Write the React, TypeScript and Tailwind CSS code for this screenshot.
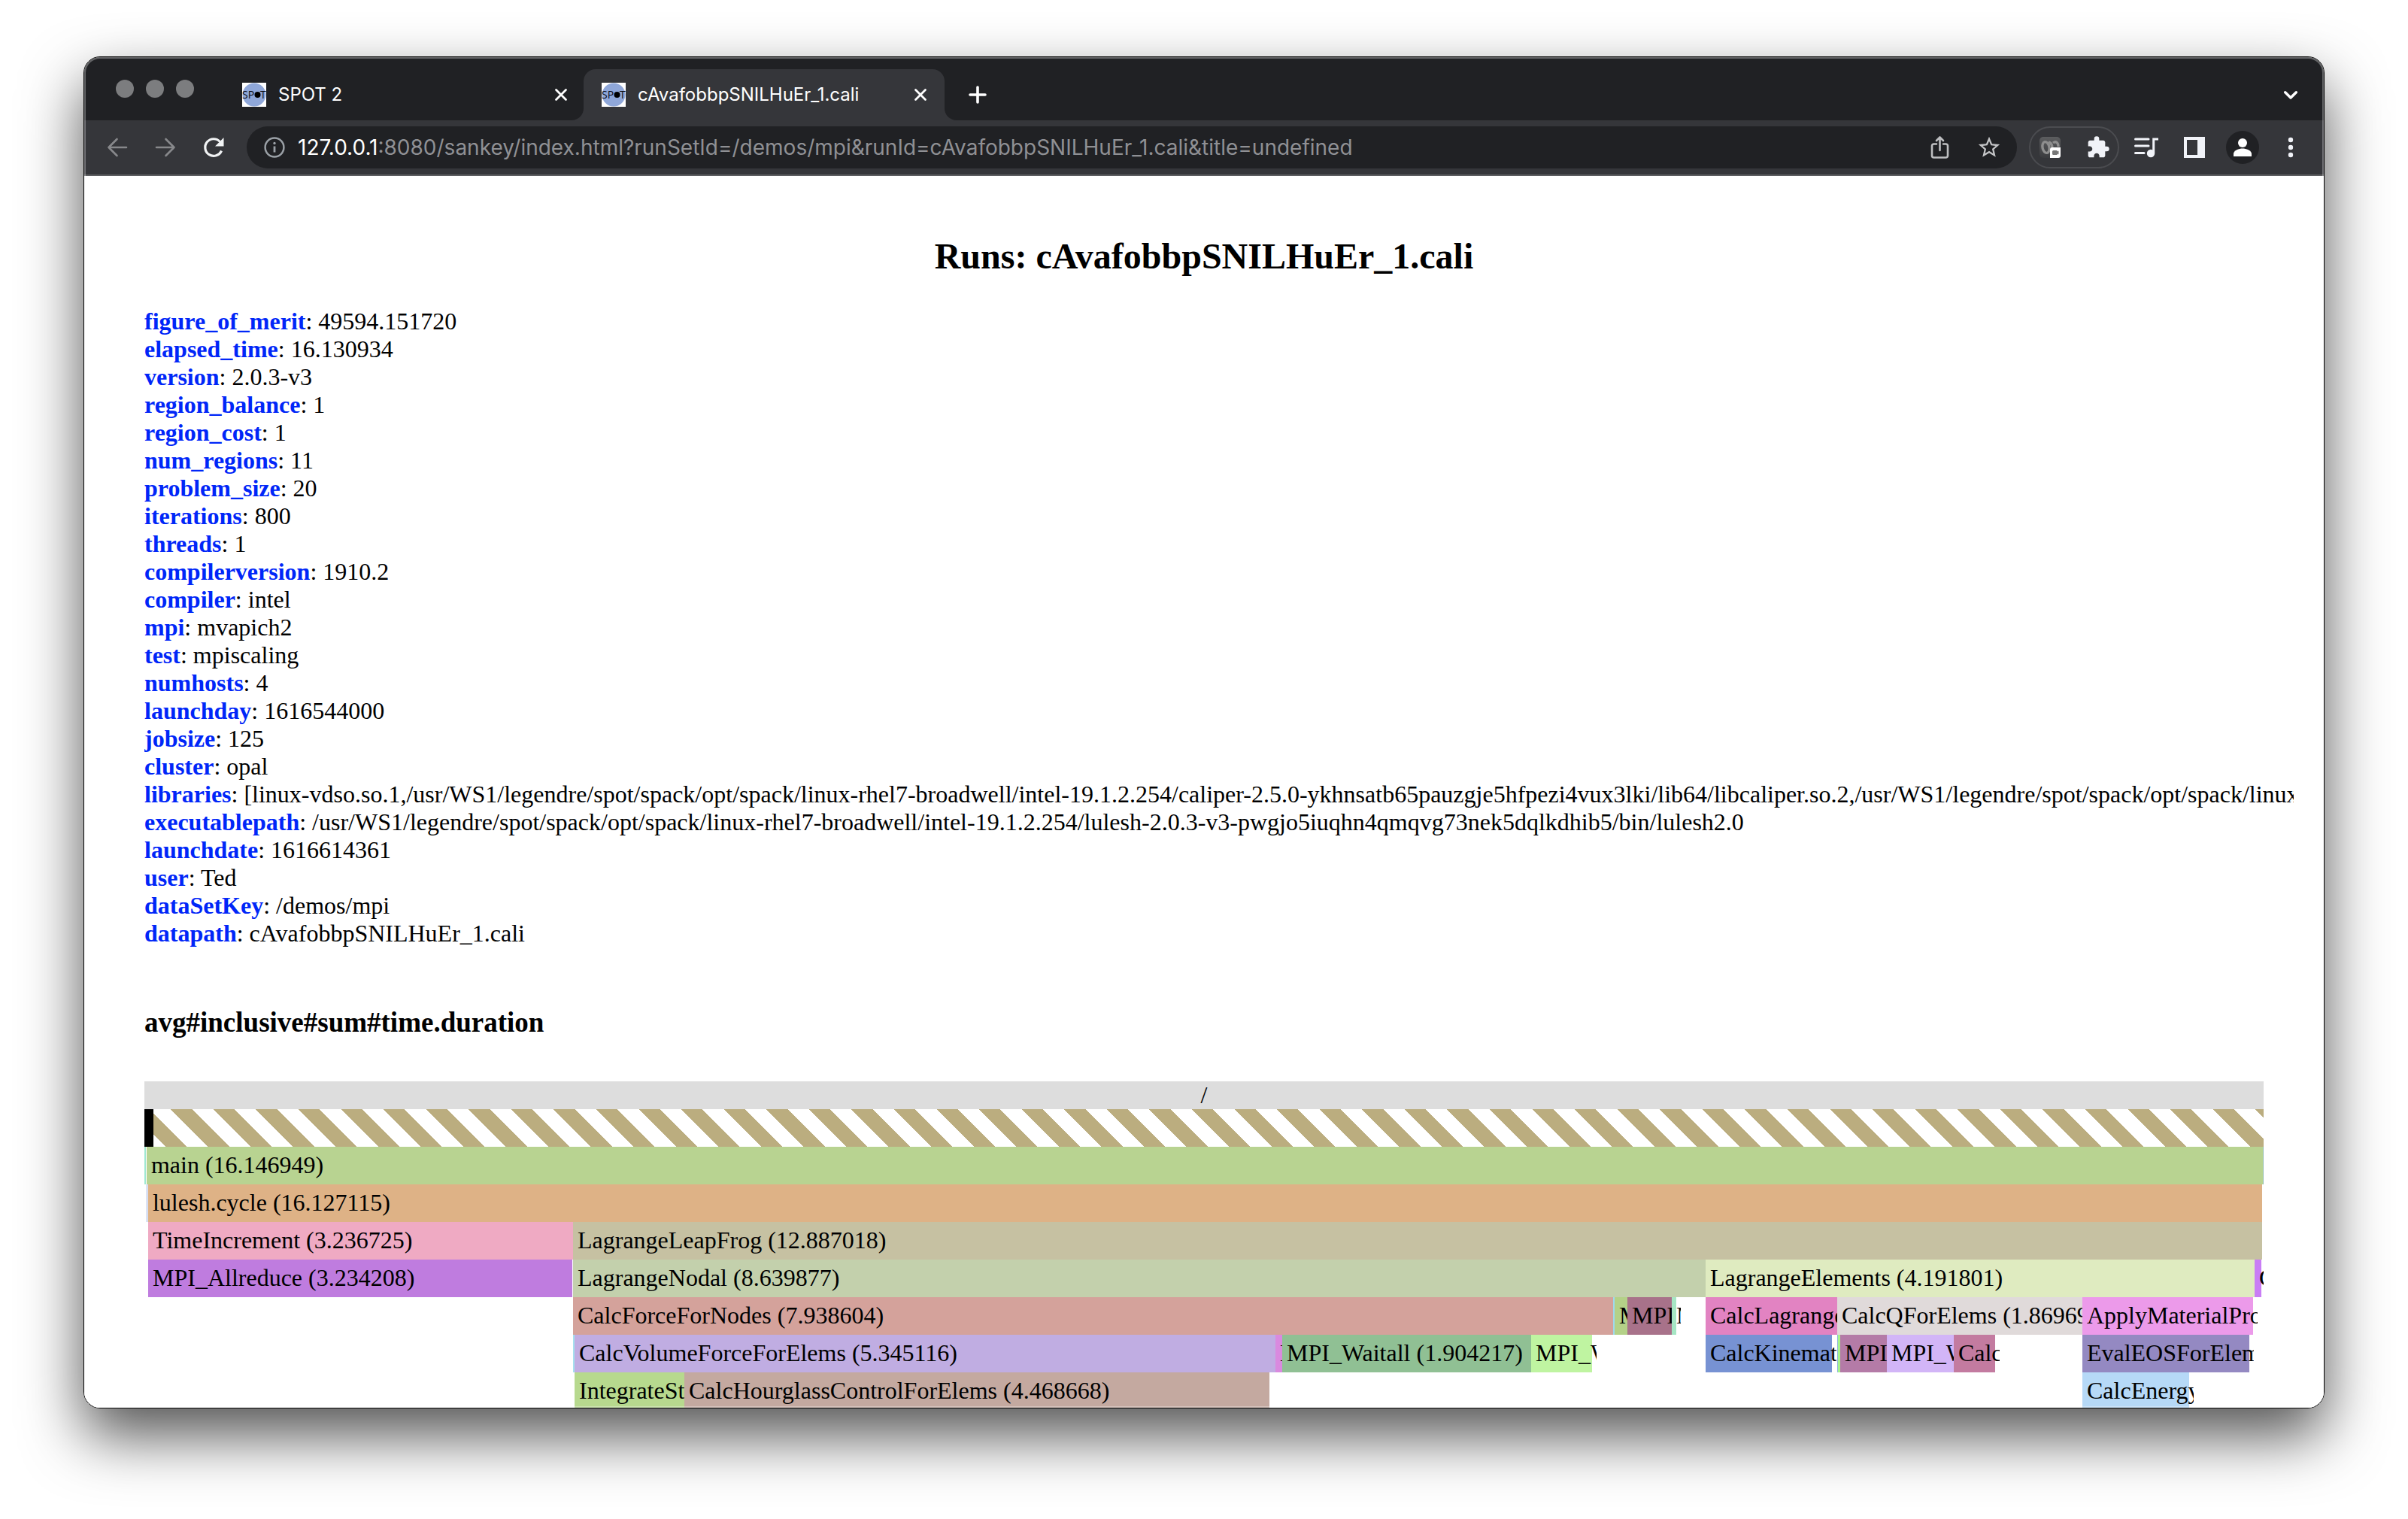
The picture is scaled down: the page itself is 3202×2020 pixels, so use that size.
import React from "react";

type Bar = { from: number; to: number; color: string; label?: string };

const SPAN = 2818;

const runInfo: [string, string][] = [
  ["figure_of_merit", "49594.151720"],
  ["elapsed_time", "16.130934"],
  ["version", "2.0.3-v3"],
  ["region_balance", "1"],
  ["region_cost", "1"],
  ["num_regions", "11"],
  ["problem_size", "20"],
  ["iterations", "800"],
  ["threads", "1"],
  ["compilerversion", "1910.2"],
  ["compiler", "intel"],
  ["mpi", "mvapich2"],
  ["test", "mpiscaling"],
  ["numhosts", "4"],
  ["launchday", "1616544000"],
  ["jobsize", "125"],
  ["cluster", "opal"],
  [
    "libraries",
    "[linux-vdso.so.1,/usr/WS1/legendre/spot/spack/opt/spack/linux-rhel7-broadwell/intel-19.1.2.254/caliper-2.5.0-ykhnsatb65pauzgje5hfpezi4vux3lki/lib64/libcaliper.so.2,/usr/WS1/legendre/spot/spack/opt/spack/linux",
  ],
  [
    "executablepath",
    "/usr/WS1/legendre/spot/spack/opt/spack/linux-rhel7-broadwell/intel-19.1.2.254/lulesh-2.0.3-v3-pwgjo5iuqhn4qmqvg73nek5dqlkdhib5/bin/lulesh2.0",
  ],
  ["launchdate", "1616614361"],
  ["user", "Ted"],
  ["dataSetKey", "/demos/mpi"],
  ["datapath", "cAvafobbpSNILHuEr_1.cali"],
];

/* Each row is one call depth; positions are units of the root's span. */
const rows: Bar[][] = [
  [
    { from: 0, to: 2, color: "#a0e8d2" },
    { from: 3, to: 2817, color: "#b8d391", label: "main (16.146949)" },
    { from: 2817, to: 2818, color: "#97bfb4" },
  ],
  [
    { from: 3, to: 4, color: "#8ea5dc" },
    { from: 5, to: 2816, color: "#deb286", label: "lulesh.cycle (16.127115)" },
  ],
  [
    { from: 5, to: 570, color: "#efaac3", label: "TimeIncrement (3.236725)" },
    { from: 570, to: 2816, color: "#c6c1a2", label: "LagrangeLeapFrog (12.887018)" },
  ],
  [
    { from: 5, to: 569, color: "#bf7cdf", label: "MPI_Allreduce (3.234208)" },
    { from: 570, to: 2076, color: "#c3d0ac", label: "LagrangeNodal (8.639877)" },
    { from: 2076, to: 2806, color: "#dfebc0", label: "LagrangeElements (4.191801)" },
    { from: 2806, to: 2815, color: "#c97df5", label: "C" },
  ],
  [
    { from: 570, to: 1953, color: "#d4a29b", label: "CalcForceForNodes (7.938604)" },
    { from: 1953, to: 1955, color: "#9fd9ee" },
    { from: 1955, to: 1972, color: "#b4d188", label: "M" },
    { from: 1972, to: 2031, color: "#a8728a", label: "MPI" },
    { from: 2031, to: 2037, color: "#a6e6c4", label: "M" },
    { from: 2076, to: 2251, color: "#e283c2", label: "CalcLagrange" },
    { from: 2251, to: 2577, color: "#e0dada", label: "CalcQForElems (1.86969" },
    { from: 2577, to: 2804, color: "#ec9aea", label: "ApplyMaterialPro" },
  ],
  [
    { from: 570, to: 572, color: "#a5e0ee" },
    { from: 572, to: 1504, color: "#c0ade2", label: "CalcVolumeForceForElems (5.345116)" },
    { from: 1504, to: 1513, color: "#d98adf", label: "M" },
    { from: 1513, to: 1844, color: "#90c094", label: "MPI_Waitall (1.904217)" },
    { from: 1844, to: 1925, color: "#bff4a1", label: "MPI_W" },
    { from: 2076, to: 2244, color: "#7792d3", label: "CalcKinemat" },
    { from: 2251, to: 2252, color: "#8fb4dc" },
    { from: 2252, to: 2255, color: "#a6f58a" },
    { from: 2255, to: 2317, color: "#b47ba7", label: "MPI_" },
    { from: 2317, to: 2406, color: "#d2b5f7", label: "MPI_W" },
    { from: 2406, to: 2461, color: "#c37ba0", label: "Calc" },
    { from: 2577, to: 2799, color: "#9489c2", label: "EvalEOSForElem" },
  ],
  [
    { from: 572, to: 718, color: "#b7d98e", label: "IntegrateStr" },
    { from: 718, to: 1496, color: "#c4a9a0", label: "CalcHourglassControlForElems (4.468668)" },
    { from: 2577, to: 2719, color: "#b6d9f7", label: "CalcEnergy" },
  ],
];

function percent(units: number) {
  return `${(units / SPAN) * 100}%`;
}

function ChartRow({ bars }: { bars: Bar[] }) {
  let cursor = 0;
  return (
    <div className="flex h-[50px] overflow-hidden">
      {bars.map((bar) => {
        const gap = bar.from - cursor;
        cursor = bar.to;
        return (
          <div
            key={bar.from}
            className="h-full shrink-0"
            style={{
              width: percent(bar.to - bar.from),
              marginLeft: percent(gap),
              backgroundColor: bar.color,
            }}
          >
            {bar.label && (
              <span className="block w-[calc(100%+6px)] overflow-hidden pl-[6px] leading-[48px] whitespace-nowrap">
                {bar.label}
              </span>
            )}
          </div>
        );
      })}
    </div>
  );
}

function SpotLogo() {
  return (
    <svg className="size-8 shrink-0" viewBox="0 0 32 32" aria-hidden="true">
      <rect width="32" height="32" fill="#fff" />
      <circle cx="16" cy="16" r="15.5" fill="#8fa7d9" />
      <text x="0" y="21" fontSize="14" fontFamily="'Open Sans', sans-serif" fill="#0b0c12">
        SP
      </text>
      <text x="24" y="21" fontSize="14" fontFamily="'Open Sans', sans-serif" fill="#0b0c12">
        T
      </text>
      <circle cx="20.5" cy="16" r="4" fill="#000" />
    </svg>
  );
}

function CloseIcon() {
  return (
    <svg className="size-5" viewBox="0 0 20 20" fill="none" stroke="#fff" strokeWidth="2.8" strokeLinecap="round" aria-hidden="true">
      <path d="M3.5 3.5l13 13M16.5 3.5l-13 13" />
    </svg>
  );
}

function Tab({ title, active = false }: { title: string; active?: boolean }) {
  return (
    <div
      className={
        active
          ? "relative -ml-0.5 flex w-[480px] items-center gap-4 rounded-t-2xl bg-[#35363a] pr-4 pl-6"
          : "flex w-[480px] items-center gap-4 pr-4 pl-6"
      }
    >
      {active && (
        <>
          <span className="absolute bottom-0 -left-4 size-4 bg-[#35363a]">
            <span className="block size-full rounded-br-2xl bg-[#202124]" />
          </span>
          <span className="absolute -right-4 bottom-0 size-4 bg-[#35363a]">
            <span className="block size-full rounded-bl-2xl bg-[#202124]" />
          </span>
        </>
      )}
      <SpotLogo />
      <button className="flex-1 overflow-hidden text-left text-[24px] leading-8 whitespace-nowrap text-white">
        {title}
      </button>
      <button aria-label="Close tab" className="flex size-8 items-center justify-center">
        <CloseIcon />
      </button>
    </div>
  );
}

function TabStrip() {
  return (
    <div className="flex h-[84px] shrink-0 bg-[#202124] pl-[42px]">
      <div className="flex items-center gap-4">
        <button aria-label="Close window" className="size-6 rounded-full bg-[#7c7d7f]" />
        <button aria-label="Minimize window" className="size-6 rounded-full bg-[#7c7d7f]" />
        <button aria-label="Zoom window" className="size-6 rounded-full bg-[#7c7d7f]" />
      </div>
      <div className="ml-10 flex flex-1 pt-4">
        <Tab title="SPOT 2" />
        <Tab title="cAvafobbpSNILHuEr_1.cali" active />
        <button aria-label="New tab" className="flex w-[88px] items-center justify-center">
          <svg className="size-6" viewBox="0 0 24 24" stroke="#fff" strokeWidth="3.6" strokeLinecap="round" aria-hidden="true">
            <path d="M12 2v20M2 12h20" />
          </svg>
        </button>
        <button aria-label="Search tabs" className="mr-4 ml-auto flex w-14 items-center justify-center">
          <svg className="size-6" viewBox="0 0 24 24" fill="none" stroke="#fff" strokeWidth="3.4" strokeLinecap="round" strokeLinejoin="round" aria-hidden="true">
            <path d="M4.700 8.700L12 16l7.300-7.300" />
          </svg>
        </button>
      </div>
    </div>
  );
}

function AddressBar() {
  return (
    <div className="ml-3 flex h-14 min-w-0 flex-1 items-center rounded-full bg-[#202124] pr-5 pl-[22px] text-[28px]">
      <button aria-label="Site information" className="mr-4 shrink-0">
        <svg className="size-[30px]" viewBox="0 0 30 30" fill="none" aria-hidden="true">
          <circle cx="15" cy="15" r="12.400" stroke="#9aa0a6" strokeWidth="2.500" />
          <path d="M15 13.500v8" stroke="#9aa0a6" strokeWidth="2.800" />
          <circle cx="15" cy="9.500" r="1.700" fill="#9aa0a6" />
        </svg>
      </button>
      <label htmlFor="address" className="shrink-0 text-white">
        127.0.0.1
      </label>
      <input
        id="address"
        className="h-10 min-w-0 flex-1 bg-transparent text-[#8f9094] outline-none"
        defaultValue=":8080/sankey/index.html?runSetId=/demos/mpi&runId=cAvafobbpSNILHuEr_1.cali&title=undefined"
      />
      <button aria-label="Share" className="mr-4 flex w-16 shrink-0 justify-center">
        <svg className="size-8" viewBox="0 0 32 32" fill="none" stroke="#bdbec0" strokeWidth="2.600" strokeLinecap="round" strokeLinejoin="round" aria-hidden="true">
          <path d="M11 11.500H7.500A2.500 2.500 0 0 0 5 14v13a2.500 2.500 0 0 0 2.500 2.500h16A2.500 2.500 0 0 0 26 27V14a2.500 2.500 0 0 0-2.500-2.500H20" />
          <path d="M15.500 20V3.500M11 7l4.500-4.500L20 7" />
        </svg>
      </button>
      <button aria-label="Bookmark this page" className="flex shrink-0 justify-center">
        <svg className="size-[34px]" viewBox="0 0 24 24" fill="#c3c4c6" aria-hidden="true">
          <path d="M22 9.240l-7.190-.620L12 2 9.190 8.630 2 9.240l5.460 4.730L5.820 21 12 17.270 18.180 21l-1.630-7.030L22 9.240zM12 15.400l-3.760 2.270 1-4.280-3.320-2.880 4.380-.380L12 6.100l1.710 4.040 4.380.380-3.320 2.880 1 4.280L12 15.400z" />
        </svg>
      </button>
    </div>
  );
}

function Toolbar() {
  return (
    <div className="flex h-[74px] shrink-0 items-center border-b-2 border-[#5c5d60] bg-[#35363a] pr-4 pl-3">
      <button aria-label="Back" className="flex w-16 justify-center">
        <svg className="size-8" viewBox="0 0 32 32" fill="none" stroke="#87888b" strokeWidth="2.600" strokeLinecap="round" strokeLinejoin="round" aria-hidden="true">
          <path d="M28 16H4.500M15.500 5L4.500 16l11 11" />
        </svg>
      </button>
      <button aria-label="Forward" className="flex w-16 justify-center">
        <svg className="size-8" viewBox="0 0 32 32" fill="none" stroke="#87888b" strokeWidth="2.600" strokeLinecap="round" strokeLinejoin="round" aria-hidden="true">
          <path d="M4 16h23.500M16.500 5l11 11-11 11" />
        </svg>
      </button>
      <button aria-label="Reload" className="flex w-16 justify-center">
        <svg className="size-8" viewBox="0 0 32 32" fill="none" aria-hidden="true">
          <path d="M26.500 20.500A11.300 11.300 0 1 1 24.500 8.500" stroke="#f1f3f4" strokeWidth="3.200" />
          <path d="M29.500 3v11.500H18z" fill="#f1f3f4" />
        </svg>
      </button>
      <AddressBar />
      <div className="ml-4 flex h-14 w-[120px] shrink-0 items-center justify-between rounded-full border-2 border-[#4b4c50] px-3">
        <button aria-label="Extension">
          <svg className="size-7" viewBox="0 0 28 28" aria-hidden="true">
            <defs>
              <linearGradient id="extension-tile" x1="0" y1="0" x2="0" y2="1">
                <stop offset="0" stopColor="#5c5d5f" />
                <stop offset="1" stopColor="#3a3b3e" />
              </linearGradient>
            </defs>
            <rect width="28" height="28" rx="5" fill="url(#extension-tile)" />
            <g fill="none" stroke="#8e8e8e" strokeWidth="3.400">
              <ellipse cx="8.500" cy="14" rx="4.500" ry="7.500" transform="rotate(-12 8.500 14)" />
              <path d="M12 7c5 1 6 7 4 14M18 8c4-3 7 0 7 5" />
            </g>
            <path d="M17 14h11v11a3 3 0 0 1-3 3H14V17a3 3 0 0 1 3-3z" fill="#fff" />
            <path d="M17 19.500a1.500 1.500 0 0 1 1.500-1.500h4a1.500 1.500 0 0 1 1.500 1.500l1.500-1v5l-1.500-1a1.500 1.500 0 0 1-1.500 1.500h-4a1.500 1.500 0 0 1-1.500-1.500z" fill="#777" />
          </svg>
        </button>
        <button aria-label="Extensions">
          <svg className="size-8 -mr-0.5" viewBox="0 0 24 24" fill="#f1f3f8" aria-hidden="true">
            <path d="M20.500 11H19V7c0-1.100-.9-2-2-2h-4V3.500a2.500 2.500 0 0 0-5 0V5H4c-1.100 0-1.990.9-1.990 2v3.800H3.500c1.490 0 2.700 1.210 2.700 2.700s-1.210 2.700-2.700 2.700H2V20c0 1.100.9 2 2 2h3.800v-1.500c0-1.490 1.210-2.700 2.700-2.700s2.700 1.210 2.700 2.700V22H17c1.100 0 2-.9 2-2v-4h1.500a2.500 2.500 0 0 0 0-5z" />
          </svg>
        </button>
      </div>
      <button aria-label="Media controls" className="flex w-[72px] shrink-0 justify-center">
        <svg className="size-8" viewBox="0 0 32 32" fill="none" aria-hidden="true">
          <path d="M1.500 5H19M1.500 14H19M1.500 23.500H13" stroke="#f1f3f8" strokeWidth="3" strokeLinecap="round" />
          <path d="M32 4.900H25.700V24" stroke="#f1f3f8" strokeWidth="3" />
          <circle cx="22" cy="24" r="5.200" fill="#f1f3f8" />
        </svg>
      </button>
      <button aria-label="Side panel" className="flex w-14 shrink-0 justify-center">
        <svg className="size-7" viewBox="0 0 28 28" aria-hidden="true">
          <path fillRule="evenodd" d="M0 0h28v28H0zM4 4v20h14V4z" fill="#f1f3f8" />
        </svg>
      </button>
      <button aria-label="Profile" className="flex w-[72px] shrink-0 justify-center">
        <svg className="size-11" viewBox="0 0 44 44" aria-hidden="true">
          <circle cx="22" cy="22" r="22" fill="#202124" />
          <circle cx="22" cy="16" r="6" fill="#fff" />
          <path d="M10 34v-3.500c0-4.500 7.500-7 12-7s12 2.500 12 7V34z" fill="#fff" />
        </svg>
      </button>
      <button aria-label="Menu" className="flex w-14 shrink-0 justify-center">
        <svg className="size-8" viewBox="0 0 32 32" fill="#f1f3f8" aria-hidden="true">
          <circle cx="16" cy="6" r="3.200" />
          <circle cx="16" cy="16" r="3.200" />
          <circle cx="16" cy="26" r="3.200" />
        </svg>
      </button>
    </div>
  );
}

function RunPage() {
  return (
    <main className="min-h-0 flex-1 overflow-hidden bg-white px-20 pt-20 font-['Liberation_Serif',serif] text-[32px] leading-[37px] text-black">
      <h1 className="text-center text-[48px] leading-[54px] font-bold">Runs: cAvafobbpSNILHuEr_1.cali</h1>
      <ul className="-mr-10 mt-[41px] overflow-hidden">
        {runInfo.map(([name, value]) => (
          <li key={name} className="whitespace-nowrap">
            <b className="text-[#0026f8]">{name}</b>: {value}
          </li>
        ))}
      </ul>
      <h2 className="mt-[78px] text-[37px] leading-[43px] font-bold">avg#inclusive#sum#time.duration</h2>
      <div className="mt-[57px]">
        <div className="bg-[#dddddd] text-center">/</div>
        <div className="h-[50px] bg-[repeating-linear-gradient(45deg,#ffffff_0px,#ffffff_20px,#bbad7f_20px,#bbad7f_40px)]">
          <div className="h-full w-3 bg-black" />
        </div>
        {rows.map((bars, depth) => (
          <ChartRow key={depth} bars={bars} />
        ))}
      </div>
    </main>
  );
}

export default function App() {
  return (
    <div className="flex h-screen flex-col bg-white px-[111px] pt-[75px] pb-[147px] font-[Inter,sans-serif]">
      <div className="relative flex min-h-0 flex-1 flex-col overflow-hidden rounded-[22px] border border-black shadow-[0_36px_80px_rgba(0,0,0,0.68)]">
        <TabStrip />
        <Toolbar />
        <RunPage />
        <div className="pointer-events-none absolute inset-0 rounded-[21px] border-2 border-white/30" />
      </div>
    </div>
  );
}
